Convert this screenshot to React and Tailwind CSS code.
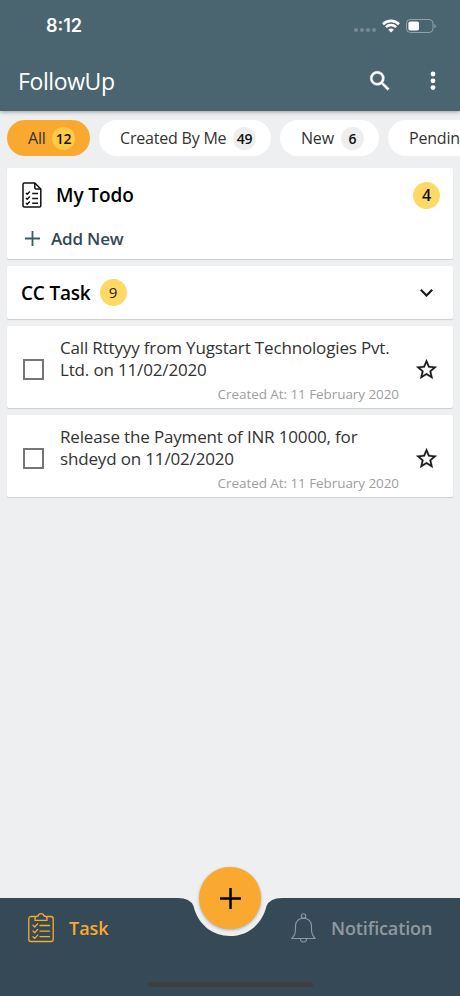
import { clsx } from 'clsx';

const filters = [
    { label: 'All', count: 12, width: 'w-[83px]', active: true },
    { label: 'Created By Me', count: 49, width: 'w-[172px]' },
    { label: 'New', count: 6, width: 'w-[99px]' },
    { label: 'Pending', count: 8, width: 'w-[124px]' },
];

const tasks = [
    {
        lines: ['Call Rttyyy from Yugstart Technologies Pvt.', 'Ltd. on 11/02/2020'],
        created: '11 February 2020',
    },
    {
        lines: ['Release the Payment of INR 10000, for', 'shdeyd on 11/02/2020'],
        created: '11 February 2020',
    },
];

function StatusBar() {
    return (
        <div className="flex h-[51px] items-center justify-between pr-[24px] pl-[46px] text-white">
            <span className="font-['Inter',sans-serif] text-[18px] font-semibold">8:12</span>
            <div className="flex items-center">
                <div className="mt-2 mr-[6px] flex gap-[2px]">
                    {[0, 1, 2, 3].map((dot) => (
                        <span key={dot} className="size-[4px] rounded-full bg-white/25" />
                    ))}
                </div>
                <svg className="mr-[6px] h-[14px] w-[18px]" viewBox="0 0 18 14" fill="none">
                    <path d="M1 5.2a11.4 11.4 0 0 1 16 0" stroke="currentColor" strokeWidth="2.6" />
                    <path d="M3.9 8.2a7.3 7.3 0 0 1 10.2 0" stroke="currentColor" strokeWidth="2.5" />
                    <path d="M9 13.6 6.2 10.8a4 4 0 0 1 5.6 0Z" fill="currentColor" />
                </svg>
                <svg className="h-[14px] w-[30px]" viewBox="0 0 30 14" fill="none">
                    <rect x="0.5" y="0.5" width="26.5" height="13" rx="3.8" stroke="#fff" strokeOpacity=".4" />
                    <rect x="2.4" y="2.5" width="10.6" height="9" rx="1.8" fill="#fff" />
                    <path d="M28.4 4.8v4.4c1-.4 1.4-1.3 1.4-2.2s-.5-1.8-1.4-2.2Z" fill="#fff" fillOpacity=".4" />
                </svg>
            </div>
        </div>
    );
}

function Header() {
    return (
        <header className="relative h-[111px] shrink-0 bg-[#4a6570] shadow-[0_1px_4px_rgba(0,0,0,0.35)]">
            <StatusBar />
            <div className="flex h-[60px] items-center pr-[15px] pl-[18px] text-white">
                <h1 className="flex-1 text-[23px] leading-none tracking-[-0.4px]">FollowUp</h1>
                <svg className="mr-[28px] size-[26px]" viewBox="0 0 24 24" fill="currentColor" stroke="currentColor" strokeWidth=".4">
                    <path d="M15.5 14h-.79l-.28-.27A6.47 6.47 0 0 0 16 9.5 6.5 6.5 0 1 0 9.5 16c1.61 0 3.09-.59 4.23-1.57l.27.28v.79l5 4.99L20.49 19l-4.99-5zm-6 0C7.01 14 5 11.99 5 9.5S7.01 5 9.5 5 14 7.01 14 9.5 11.99 14 9.5 14z" />
                </svg>
                <svg className="size-[24px]" viewBox="0 0 24 24" fill="currentColor">
                    <circle cx="12" cy="5" r="2.4" />
                    <circle cx="12" cy="11.8" r="2.4" />
                    <circle cx="12" cy="18.6" r="2.4" />
                </svg>
            </div>
        </header>
    );
}

function FilterChip({ label, count, width, active }) {
    return (
        <button
            className={clsx(
                'flex h-9 shrink-0 items-center justify-between rounded-full pr-[15px] pl-[21px] text-[16px] tracking-[-0.2px] text-[#333]',
                width,
                active ? 'bg-[#faa930]' : 'bg-white',
            )}
        >
            <span>{label}</span>
            <span
                className={clsx(
                    'flex size-[23px] items-center justify-center rounded-full text-[14px] font-semibold text-[#111]',
                    active ? 'bg-[#fecb45]' : 'bg-[#eeeeee]',
                )}
            >
                {count}
            </span>
        </button>
    );
}

function Card({ className = '', children }) {
    return (
        <section className={clsx('rounded-[2px] bg-white shadow-[0_1px_1px_rgba(0,0,0,0.14)]', className)}>
            {children}
        </section>
    );
}

function DocumentIcon() {
    return (
        <svg className="h-[26px] w-[20px]" viewBox="0 0 20 26" fill="none" stroke="#111" strokeWidth="1.5" strokeLinejoin="round">
            <path d="M2.2 1h10.6l6 6v16.8c0 .6-.4 1.2-1.2 1.2H2.2c-.8 0-1.2-.6-1.2-1.2V2.2C1 1.4 1.4 1 2.2 1Z" />
            <path d="M12.8 1v4.8c0 .7.5 1.2 1.2 1.2h4.8" />
            <path d="m4 11 1.2 1.2 2.6-2.8M4 16l1.2 1.2 2.6-2.8M4 21l1.2 1.2 2.6-2.8M10.2 11.4h5.800M10.2 16.4h5.800M10.2 21.3h5.800" />
        </svg>
    );
}

function TodoCard() {
    return (
        <Card className="h-[91px] pr-[13px] pl-[15px]">
            <div className="flex h-[54px] items-center">
                <DocumentIcon />
                <h2 className="ml-[14px] flex-1 text-[19px] font-semibold tracking-[-0.1px] text-black">My Todo</h2>
                <span className="flex size-[27px] items-center justify-center rounded-full bg-[#fed966] text-[16px] font-semibold text-[#111]">
                    4
                </span>
            </div>
            <button className="flex h-[33px] items-center pl-[3px] text-[17px] font-semibold tracking-[-0.2px] text-[#344955]">
                <svg className="mr-[11px] size-[15px]" viewBox="0 0 14 14" stroke="#3d5c62" strokeWidth="1.7">
                    <path d="M7 0v14M0 7h14" />
                </svg>
                Add New
            </button>
        </Card>
    );
}

function CcTaskCard() {
    return (
        <Card className="flex h-[53px] items-center pr-[20px] pl-[14px]">
            <h2 className="pt-px text-[19px] font-semibold tracking-[-0.2px] text-black">CC Task</h2>
            <span className="ml-[9px] flex size-[27px] items-center justify-center rounded-full bg-[#fed966] text-[15px] text-[#222]">
                9
            </span>
            <svg className="ml-auto h-[8px] w-[13px]" viewBox="0 0 13 8" fill="none" stroke="#1b1b1b" strokeWidth="2.2">
                <path d="m.8.8 5.7 5.7L12.2.8" />
            </svg>
        </Card>
    );
}

function TaskCard({ lines, created }) {
    return (
        <Card className="flex h-[82px]">
            <span className="mt-[33px] ml-[16px] size-[21px] shrink-0 border-2 border-[#757575]" />
            <div className="ml-[16px] w-[339px] shrink-0 pt-[11px]">
                <p className="text-[17px] leading-[22px] tracking-[-0.16px] whitespace-nowrap text-[#333]">
                    {lines[0]}
                    <br />
                    {lines[1]}
                </p>
                <p className="mt-[4px] text-right text-[13.5px] leading-[18px] tracking-[-0.07px] text-[#9e9e9e]">
                    Created At: {created}
                </p>
            </div>
            <svg className="mt-[31px] ml-[15px] size-[25px] shrink-0" viewBox="0 0 24 24" fill="#1b1b1b" stroke="#1b1b1b" strokeWidth=".2">
                <path d="M22 9.24l-7.19-.62L12 2 9.19 8.63 2 9.24l5.46 4.73L5.82 21 12 17.27 18.18 21l-1.63-7.03L22 9.24zM12 15.4l-3.76 2.27 1-4.28-3.32-2.88 4.38-.38L12 6.1l1.71 4.04 4.38.38-3.32 2.88 1 4.28L12 15.4z" />
            </svg>
        </Card>
    );
}

function ClipboardIcon() {
    return (
        <svg className="h-[30px] w-[26px]" viewBox="0 0 26 30" fill="none" stroke="currentColor" strokeWidth="1.3" strokeLinecap="round" strokeLinejoin="round">
            <path d="M7 3.5H3A2.2 2.2 0 0 0 .8 5.7v20.6A2.2 2.2 0 0 0 3 28.5h20a2.2 2.2 0 0 0 2.2-2.2V5.700A2.2 2.2 0 0 0 23 3.5h-4" />
            <path d="M7 7.4V5.6C7 4 8.200 3 10 3c.4-1.4 1.5-2.3 3-2.3s2.6.9 3 2.300c1.8 0 3 1 3 2.600v1.800H7Z" />
            <path d="m5 12.3 1.7 1.7 3-3.3M5 18l1.7 1.7 3-3.3M5 23.7l1.7 1.7 3-3.3M12 12.5h9.500M12 18.2h9.500M12 23.7h9.500" />
        </svg>
    );
}

function BellIcon() {
    return (
        <svg className="h-[30px] w-[25px]" viewBox="0 0 25 30" fill="none" stroke="currentColor" strokeWidth="1.1" strokeLinejoin="round">
            <circle cx="12.5" cy="3" r="2.2" />
            <path d="M.8 25.5c2.5-2.5 3.7-5 3.7-9V13c0-4.7 3.3-7.8 8-7.8s8 3.1 8 7.8v3.5c0 4 1.2 6.5 3.7 9H.8Z" />
            <path d="M9.4 25.5c0 2 1.2 3.5 3.1 3.5s3.1-1.5 3.1-3.5" />
        </svg>
    );
}

function BottomNav() {
    return (
        <nav className="relative h-[98px] shrink-0">
            <svg className="absolute inset-0 h-[98px] w-[460px]" viewBox="0 0 460 98">
                <path d="M0 0H178Q190 0 193.5 8C198 27 213 38 230 38S262 27 266.5 8Q270 0 282 0H460V98H0Z" fill="#354a56" />
            </svg>
            <div className="relative flex h-[60px] items-center text-[18px] font-semibold">
                <div className="flex w-[288px] items-center gap-[15px] pl-[28px] text-[#faa930]">
                    <ClipboardIcon />
                    <span>Task</span>
                </div>
                <div className="flex items-center gap-[15px] pl-[3px] tracking-[-0.12px] text-[#90999f]">
                    <BellIcon />
                    <span>Notification</span>
                </div>
            </div>
            <div className="relative mx-auto mt-[24px] h-[5px] w-[165px] rounded-full bg-[#403d40]" />
            <button className="absolute -top-[31px] left-[199px] flex size-[62px] items-center justify-center rounded-full bg-[#faa930] shadow-[0_1px_3px_rgba(0,0,0,0.3)]">
                <svg className="size-[21px]" viewBox="0 0 21 21" stroke="#000" strokeWidth="2.5">
                    <path d="M10.5 0v21M0 10.5h21" />
                </svg>
            </button>
        </nav>
    );
}

export default function App() {
    return (
        <div className="flex h-[996px] w-[460px] flex-col overflow-hidden bg-[#edeff0] font-['Open_Sans',sans-serif]">
            <Header />
            <div className="flex shrink-0 gap-[9px] overflow-hidden pt-[9px] pl-[7px]">
                {filters.map((filter) => (
                    <FilterChip key={filter.label} {...filter} />
                ))}
            </div>
            <main className="flex flex-1 flex-col gap-[7px] px-[7px] pt-[12px]">
                <TodoCard />
                <CcTaskCard />
                {tasks.map((task) => (
                    <TaskCard key={task.lines[0]} {...task} />
                ))}
            </main>
            <BottomNav />
        </div>
    );
}
